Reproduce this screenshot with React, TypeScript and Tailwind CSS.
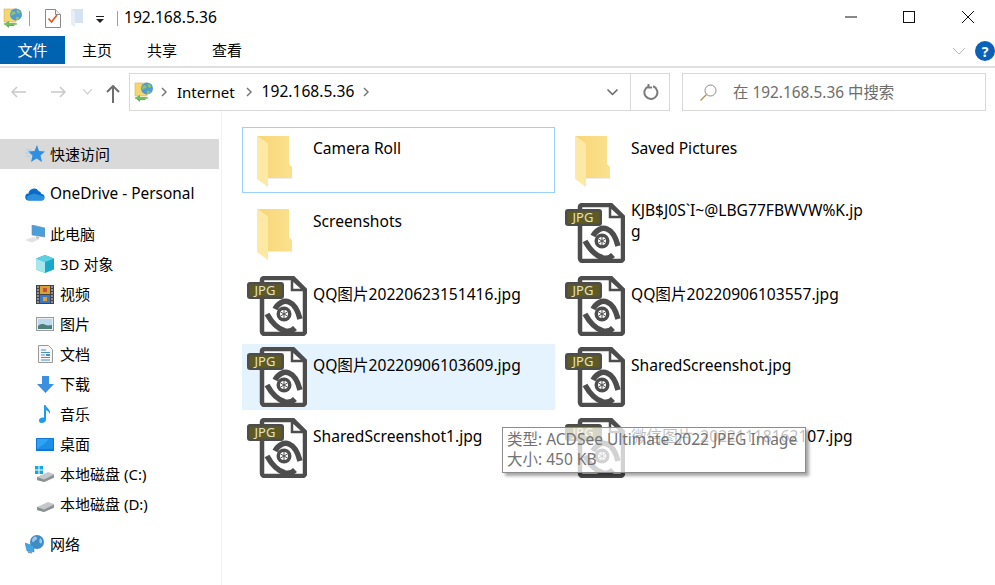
import type { ReactNode } from 'react';

function NetFolderIcon() {
  return (
    <svg width="20" height="20" viewBox="0 0 20 20">
      <rect x="1" y="1" width="12" height="13" fill="#f6d66f" stroke="#d8b24a" strokeWidth="0.6" />
      <circle cx="13" cy="6.5" r="6" fill="#4f9bd6" />
      <path d="M8.5 4c2-1.500 3-.5 4 .5s-1 2-2 2-1 2-2.500 1M14 1.500c1 1 2.500 1 3 2.500s-1 2-2 1.500-2-2-1-4M13 9c1.500-.5 3 0 3 1s-1 2-2 2-1.500-2-1-3" fill="#8fc26a" />
      <path d="M1 16l5-3v2h7l-2 3H6v2z" fill="#5bb84a" />
      <rect x="1" y="15" width="13" height="2" fill="#7cc36a" opacity="0.7" />
    </svg>
  );
}

function DocCheckIcon() {
  return (
    <svg width="16" height="19" viewBox="0 0 16 19">
      <path d="M.5.5h10l5 5v13H.5z" fill="#fff" stroke="#8a8a8a" />
      <path d="M10.500.5v5h5" fill="#eee" stroke="#8a8a8a" />
      <path d="M3.500 9.500l3 3.500 5.500-7" fill="none" stroke="#e2561c" strokeWidth="1.600" />
    </svg>
  );
}

function PaleFolderIcon() {
  return (
    <svg width="13" height="18" viewBox="0 0 13 18">
      <path d="M0 0h12v14h1-9v4l-4-3z" fill="#d5e2f2" />
      <path d="M0 0l4 3v15l-4-3z" fill="#e6eef8" />
    </svg>
  );
}

function QuickStarIcon() {
  return (
    <svg width="20" height="18" viewBox="0 0 20 18">
      <path d="M12 0l2 6 6 .5-4.500 4 1.500 6.500-5.500-3.500L6 17l1.500-6.500L3 6.500 9.500 6z" fill="#2f8fe0" />
      <path d="M1 5h6M0 8h5M1 11h5" stroke="#9fd0f5" strokeWidth="1" />
    </svg>
  );
}

function CloudIcon() {
  return (
    <svg width="20" height="14" viewBox="0 0 20 14">
      <path d="M4 13.500a3.500 3.500 0 0 1-.5-7A5.500 5.500 0 0 1 13.500 4a4.500 4.500 0 0 1 3 3 3.300 3.300 0 0 1 .5 6.500z" fill="#0a6cc4" />
      <path d="M4 13.500a2.500 2.500 0 0 1-1-4.700L9 6.500l9.500 2.800a2.500 2.500 0 0 1-1.500 4.200z" fill="#2c8fe0" />
    </svg>
  );
}

function PcIcon() {
  return (
    <svg width="20" height="18" viewBox="0 0 20 18">
      <path d="M7 0l13 3v9l-13-2z" fill="#4a9fdd" stroke="#7c8c9a" strokeWidth="0.6" />
      <path d="M0 15l8-3 7 2-8 3.500z" fill="#dfe3e6" />
      <path d="M11 11l3 1v2l-3-1z" fill="#b9c0c6" />
    </svg>
  );
}

function CubeIcon() {
  return (
    <svg width="18" height="18" viewBox="0 0 18 18">
      <path d="M9 0l9 3.500v11L9 18l-9-3.500v-11z" fill="#18a9c9" />
      <path d="M0 3.500L9 7v11l-9-3.500z" fill="#a8e6ee" />
      <path d="M9 0l9 3.500L9 7 0 3.500z" fill="#5fd0e2" />
    </svg>
  );
}

function FilmIcon() {
  return (
    <svg width="18" height="19" viewBox="0 0 18 19">
      <rect width="18" height="19" fill="#444" />
      <rect x="4" y="1" width="10" height="8" fill="#d8a23a" />
      <rect x="4" y="10" width="10" height="8" fill="#3b78c8" />
      <rect x="7" y="3" width="4" height="4" fill="#c8503a" />
      <rect x="7" y="12" width="4" height="4" fill="#e0a030" />
      <path d="M1 2h2M1 5h2M1 8h2M1 11h2M1 14h2M1 17h2M15 2h2M15 5h2M15 8h2M15 11h2M15 14h2M15 17h2" stroke="#ddd" strokeWidth="1.200" />
    </svg>
  );
}

function PictureIcon() {
  return (
    <svg width="18" height="14" viewBox="0 0 18 14">
      <rect x="0.500" y="0.500" width="17" height="13" fill="#e8eef2" stroke="#9a9a9a" />
      <rect x="2" y="2" width="14" height="10" fill="#bcd8ec" />
      <path d="M2 9c3-3 6-2 8-1s4 0 6 0v4H2z" fill="#4d7f7c" />
    </svg>
  );
}

function DocLinesIcon() {
  return (
    <svg width="15" height="18" viewBox="0 0 15 18">
      <path d="M.5.500h10l4 4v13H.5z" fill="#f7f7f7" stroke="#9a9a9a" />
      <path d="M3 5h5M3 7.500h9M3 10h4M3 12.500h9M3 15h9" stroke="#4b8fc9" strokeWidth="1.100" />
      <rect x="8" y="9" width="4" height="2" fill="#4b8fc9" />
    </svg>
  );
}

function DownloadIcon() {
  return (
    <svg width="17" height="17" viewBox="0 0 17 17">
      <path d="M5 0h7v8h5l-8.500 9L0 8h5z" fill="#3d8fe0" />
    </svg>
  );
}

function NoteIcon() {
  return (
    <svg width="12" height="18" viewBox="0 0 12 18">
      <path d="M5 0h1.500c.5 3 5.500 4 4.500 9-1-2.500-3-3.500-4-3.800V14.500C7 17 4.500 18 2.500 18S0 16.500 0 15.200 2 12 5 12.500z" fill="#1a9cf0" />
    </svg>
  );
}

function DesktopIcon() {
  return (
    <svg width="18" height="13" viewBox="0 0 18 13">
      <rect width="18" height="13" rx="0.500" fill="#0f78d4" />
      <rect x="1" y="1" width="16" height="10" fill="#2fa4f5" />
      <path d="M1 11l8-6 4-4h4v10z" fill="#1e8fe6" />
    </svg>
  );
}

function DriveIcon({ win }: { win?: boolean }) {
  return (
    <svg width="20" height="16" viewBox="0 0 20 16">
      {win && <path d="M0 0h3.500v3.500H0zM4.500 0H8v3.500H4.500zM0 4.500h3.500V8H0zM4.500 4.500H8V8H4.500z" fill="#12a8e8" />}
      <path d="M2 11l11-5 6 2v4l-10 4-7-2z" fill="#c4c8ca" />
      <path d="M2 11l7 2.500 10-5v3L9 16l-7-2z" fill="#8d9194" />
      <path d="M4 13l2 .8" stroke="#3fb54a" strokeWidth="1.200" />
    </svg>
  );
}

function NetworkIcon() {
  return (
    <svg width="20" height="19" viewBox="0 0 20 19">
      <circle cx="12" cy="7" r="7" fill="#3d8cc4" />
      <path d="M9 2c2-1 3 0 3 1.500s-2 1.500-3 3-2 0-2-1 1-3 2-3.500M15 3c1 .5 2.500 2 2 4s-2 2-2.500.5 0-3 .5-4.500" fill="#9cc9e6" />
      <path d="M0 8l9 3v6l-7-1z" fill="#43a6e2" stroke="#2f7fb5" strokeWidth="0.500" />
      <path d="M3 16l4 .5v2L3 18z" fill="#8a9aa6" />
    </svg>
  );
}

function FolderIcon() {
  return (
    <svg width="60" height="60" viewBox="0 0 60 60" className="shrink-0">
      <defs>
        <linearGradient id="folderBack" x1="0" y1="0" x2="1" y2="0">
          <stop offset="0" stopColor="#f8d674" />
          <stop offset="1" stopColor="#fbe08f" />
        </linearGradient>
      </defs>
      <path d="M10 6h32v28l3 3v11H21V14z" fill="url(#folderBack)" />
      <path d="M10 6l11 8v43l-11-8z" fill="#fde8a4" />
      <path d="M21 48h24l2 1H21z" fill="#eeeeee" />
    </svg>
  );
}

function JpgIcon() {
  return (
    <svg width="60" height="60" viewBox="0 0 60 60" className="shrink-0">
      <path d="M17 2h29l12 12v41.500a2.500 2.500 0 0 1-2.500 2.500h-38a2.500 2.500 0 0 1-2.500-2.500v-51A2.500 2.500 0 0 1 17 2z" fill="#fff" stroke="#4d4d4d" strokeWidth="4.500" />
      <path d="M45 3v11h12z" fill="#fff" stroke="#4d4d4d" strokeWidth="2.500" />
      <rect x="0" y="6" width="37" height="17" rx="3" fill="#4d4d4d" />
      <rect x="2.500" y="8.500" width="32" height="12" fill="#5e5a26" />
      <text x="18" y="19" textAnchor="middle" fontSize="13" fontFamily="Noto Sans, sans-serif" fill="#e4e2c4">JPG</text>
      <path d="M28 33C31 27 37 24 42 26C47 28 51 35 53 43" fill="none" stroke="#4d4d4d" strokeWidth="5.500" />
      <path d="M20 38C25 47 31 53 38 55C42 56 46 54 48 52" fill="none" stroke="#4d4d4d" strokeWidth="5.500" />
      <circle cx="37" cy="38" r="7.500" fill="#4d4d4d" />
      <circle cx="37" cy="38" r="4" fill="#fff" />
      <path d="M37 34v4M40.500 36l-3.500 2M40.500 40l-3.500-2M37 42v-4M33.500 40l3.500-2M33.500 36l3.500 2" stroke="#4d4d4d" strokeWidth="1" />
    </svg>
  );
}

function Tile({ icon, name, className = '' }: { icon: ReactNode; name: string; className?: string }) {
  return (
    <div className={`flex h-[66px] w-[313px] items-start border border-transparent pl-[4px] pt-[2px] ${className}`}>
      {icon}
      <div className="-mt-[3px] flex h-[42px] w-[244px] items-center break-all pl-[6px] text-[15.6px] leading-[21px] text-black">
        <span>{name}</span>
      </div>
    </div>
  );
}

function SideRow({ icon, label, sub, active }: { icon: ReactNode; label: ReactNode; sub?: boolean; active?: boolean }) {
  return (
    <div className={`flex h-[30px] items-center ${sub ? 'pl-[35px]' : 'pl-[25px]'} ${active ? 'bg-[#d9d9d9]' : ''}`}>
      <span className="flex w-[20px] items-center justify-center">{icon}</span>
      <span className="ml-[5px] whitespace-nowrap text-[15px] text-black">{label}</span>
    </div>
  );
}

export default function App() {
  return (
    <div className="relative flex h-[585px] w-[995px] flex-col overflow-hidden bg-white font-['Noto_Sans','Noto_Sans_CJK_SC',sans-serif] text-[15px] text-black">
      {/* title bar */}
      <div className="flex h-[36px] items-center">
        <span className="ml-[3px]"><NetFolderIcon /></span>
        <span className="ml-[6px] h-[15px] w-px bg-[#a0a0a0]" />
        <span className="ml-[15px]"><DocCheckIcon /></span>
        <span className="ml-[10px]"><PaleFolderIcon /></span>
        <svg width="8" height="7" viewBox="0 0 8 7" className="ml-[12px] mt-[2px]">
          <path d="M0 0h8v1H0zM0 3h8L4 7z" fill="#222" />
        </svg>
        <span className="ml-[13px] h-[15px] w-px bg-[#a0a0a0]" />
        <span className="-mt-px ml-[6px] text-[15.6px]">192.168.5.36</span>
        <div className="mb-[2px] ml-auto flex items-center pr-[21px]">
          <svg width="12" height="12" viewBox="0 0 12 12" className="mr-[46px]"><path d="M0 6h12" stroke="#111" /></svg>
          <svg width="12" height="12" viewBox="0 0 12 12" className="mr-[47px]"><rect x="0.500" y="0.500" width="11" height="11" fill="none" stroke="#111" /></svg>
          <svg width="12" height="12" viewBox="0 0 12 12"><path d="M0 0l12 12M12 0L0 12" stroke="#111" /></svg>
        </div>
      </div>

      {/* ribbon tabs */}
      <div className="flex h-[32px] items-start border-b-2 border-[#e0e0e0]">
        <div className="flex h-[28px] w-[65px] items-center justify-center bg-[#0063b1] pt-px text-white">文件</div>
        <div className="ml-[17px] flex h-[28px] w-[30px] items-center pt-px">主页</div>
        <div className="ml-[35px] flex h-[28px] w-[30px] items-center pt-px">共享</div>
        <div className="ml-[35px] flex h-[28px] w-[30px] items-center pt-px">查看</div>
        <div className="ml-auto mt-[5px] flex items-center">
          <svg width="12" height="7" viewBox="0 0 12 7" className="mr-[10px]"><path d="M0 0l6 6 6-6" fill="none" stroke="#b5b5b5" /></svg>
          <span className="flex h-[20px] w-[20px] items-center justify-center rounded-full bg-[#0a62b8] text-[14px] font-bold text-white">?</span>
        </div>
      </div>

      {/* address row */}
      <div className="mt-[5px] flex h-[38px] items-start">
        <div className="flex h-[38px] w-[129px] items-center">
          <svg width="16" height="12" viewBox="0 0 16 12" className="ml-[11px]"><path d="M15 6H1M6 1L1 6l5 5" fill="none" stroke="#c9c9c9" strokeWidth="1.500" /></svg>
          <svg width="16" height="12" viewBox="0 0 16 12" className="ml-[23px]"><path d="M1 6h14M10 1l5 5-5 5" fill="none" stroke="#c9c9c9" strokeWidth="1.500" /></svg>
          <svg width="9" height="6" viewBox="0 0 9 6" className="ml-[17px]"><path d="M0 0l4.500 5L9 0" fill="none" stroke="#d0d0d0" strokeWidth="1.200" /></svg>
          <svg width="14" height="18" viewBox="0 0 14 18" className="ml-[14px] mt-[3px]"><path d="M7 18V1M1 7l6-6 6 6" fill="none" stroke="#6e6e6e" strokeWidth="2" /></svg>
        </div>
        <div className="flex h-[38px] w-[541px] items-center border border-[#d9d9d9]">
          <span className="ml-[4px]"><NetFolderIcon /></span>
          <svg width="6" height="10" viewBox="0 0 6 10" className="ml-[7px]"><path d="M1 1l4 4-4 4" fill="none" stroke="#777" strokeWidth="1.500" /></svg>
          <span className="ml-[10px]">Internet</span>
          <svg width="6" height="10" viewBox="0 0 6 10" className="ml-[11px]"><path d="M1 1l4 4-4 4" fill="none" stroke="#777" strokeWidth="1.500" /></svg>
          <span className="ml-[10px] text-[15.6px]">192.168.5.36</span>
          <svg width="6" height="10" viewBox="0 0 6 10" className="ml-[9px]"><path d="M1 1l4 4-4 4" fill="none" stroke="#777" strokeWidth="1.500" /></svg>
          <div className="ml-auto flex h-full items-center">
            <svg width="11" height="7" viewBox="0 0 11 7" className="mr-[12px]"><path d="M.5.5l5 5 5-5" fill="none" stroke="#666" strokeWidth="1.500" /></svg>
            <div className="flex h-full w-[39px] items-center justify-center border-l border-[#d9d9d9]">
              <svg width="16" height="16" viewBox="0 0 16 16" className="ml-[2px]"><path d="M10 2.300a6.500 6.500 0 1 1-4.500.1M5.500 0v3.500H9" fill="none" stroke="#7a7a7a" strokeWidth="2" /></svg>
            </div>
          </div>
        </div>
        <div className="ml-[12px] flex h-[38px] w-[304px] items-center border border-[#d9d9d9]">
          <svg width="17" height="17" viewBox="0 0 17 17" className="ml-[17px]"><circle cx="10.500" cy="6.500" r="5.500" fill="none" stroke="#8a8a8a" /><path d="M6.500 10.500L.5 16.500" stroke="#b08a5a" strokeWidth="1.200" /></svg>
          <span className="ml-[16px] pt-px text-[15.4px] text-[#6d6d6d]">在 192.168.5.36 中搜索</span>
        </div>
      </div>

      {/* body */}
      <div className="flex flex-1">
        <aside className="w-[222px] shrink-0 border-r border-[#f2f2f2] pr-[2px] pt-[28px]">
          <SideRow icon={<QuickStarIcon />} label="快速访问" active />
          <div className="mt-[10px]">
            <SideRow icon={<CloudIcon />} label={<span className="text-[15.4px]">OneDrive - Personal</span>} />
          </div>
          <div className="mt-[10px]">
            <SideRow icon={<PcIcon />} label="此电脑" />
            <SideRow sub icon={<CubeIcon />} label="3D 对象" />
            <SideRow sub icon={<FilmIcon />} label="视频" />
            <SideRow sub icon={<PictureIcon />} label="图片" />
            <SideRow sub icon={<DocLinesIcon />} label="文档" />
            <SideRow sub icon={<DownloadIcon />} label="下载" />
            <SideRow sub icon={<NoteIcon />} label="音乐" />
            <SideRow sub icon={<DesktopIcon />} label="桌面" />
            <SideRow sub icon={<DriveIcon win />} label="本地磁盘 (C:)" />
            <SideRow sub icon={<DriveIcon />} label="本地磁盘 (D:)" />
          </div>
          <div className="mt-[10px]"><SideRow icon={<NetworkIcon />} label="网络" /></div>
        </aside>

        <main className="grid grid-cols-[318px_318px] grid-rows-[73px_73px_71px_71px_66px] pl-[20px] pt-[16px]">
          <Tile icon={<FolderIcon />} name="Camera Roll" className="!border-[#99d1ff]" />
          <Tile icon={<FolderIcon />} name="Saved Pictures" />
          <Tile icon={<FolderIcon />} name="Screenshots" />
          <Tile icon={<JpgIcon />} name="KJB$J0S`I~@LBG77FBWVW%K.jpg" />
          <Tile icon={<JpgIcon />} name="QQ图片20220623151416.jpg" />
          <Tile icon={<JpgIcon />} name="QQ图片20220906103557.jpg" />
          <Tile icon={<JpgIcon />} name="QQ图片20220906103609.jpg" className="bg-[#e5f3ff] !border-[#e5f3ff]" />
          <Tile icon={<JpgIcon />} name="SharedScreenshot.jpg" />
          <Tile icon={<JpgIcon />} name="SharedScreenshot1.jpg" />
          <Tile icon={<JpgIcon />} name="微信图片_20221118162107.jpg" />
        </main>
      </div>

      {/* tooltip, fading in over the hovered tile */}
      <div className="absolute left-[502px] top-[427px] h-[46px] w-[304px] border border-[#8c8c8c] bg-white/75 pl-[4px] pt-[1px] text-[15.5px] leading-[20px] text-[#727272] shadow-[3px_3px_3px_rgba(0,0,0,0.35)]">
        <div>类型: ACDSee Ultimate 2022 JPEG Image</div>
        <div>大小: 450 KB</div>
      </div>
    </div>
  );
}
